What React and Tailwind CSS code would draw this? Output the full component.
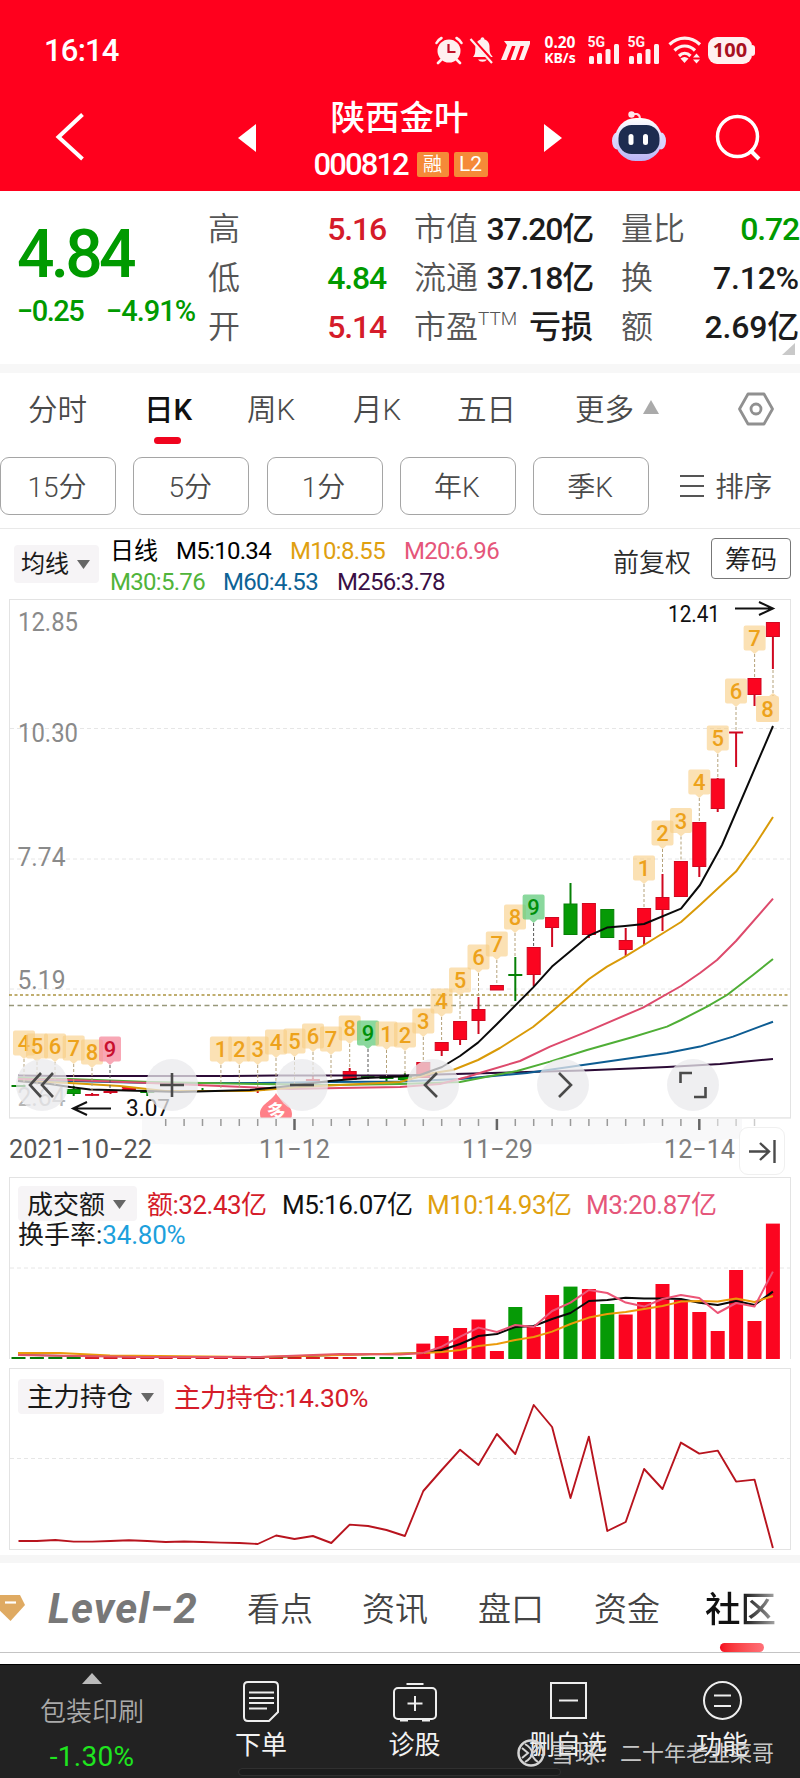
const STEP = 18.4
const xAt = (i) => 18.5 + STEP * i

// [index, bodyTop, bodyBottom, wickTop, wickBottom, isUp]
const candles = [
	[0, 1085, 1087, 1085, 1087, false],
	[3, 1089, 1094, 1086, 1096, false],
	[4, 1094, 1095.5, 1093, 1096, true],
	[5, 1091, 1093, 1090, 1094, true],
	[6, 1087, 1090, 1087, 1090, true],
	[7, 1090, 1093, 1088, 1096, false],
	[10, 1090, 1091, 1088, 1092, false],
	[13, 1089, 1091, 1088, 1093, true],
	[16, 1079, 1081, 1076, 1081, true],
	[17, 1081, 1082, 1080, 1082, false],
	[18, 1071, 1080, 1068, 1080, true],
	[19, 1075, 1078, 1075, 1079, false],
	[20, 1076, 1079, 1075, 1081, false],
	[21, 1076, 1080, 1073, 1080, false],
	[22, 1062, 1078, 1062, 1078, true],
	[23, 1042, 1051, 1042, 1056, true],
	[24, 1021, 1040, 1021, 1045, true],
	[25, 1009, 1021, 997, 1034, true],
	[26, 985, 990.5, 985, 990, true],
	[27, 974, 976, 957, 1001, false],
	[28, 947, 975, 947, 986, true],
	[29, 917, 928, 917, 947, true],
	[30, 903.5, 935, 883, 935, false],
	[31, 903, 935, 903, 938, true],
	[32, 909, 938, 909, 938, false],
	[33, 940, 950, 928, 956, true],
	[34, 908, 937, 908, 945, true],
	[35, 897, 910, 874, 931, true],
	[36, 861, 897, 861, 897, true],
	[37, 822, 867, 822, 877, true],
	[38, 778.5, 809, 778, 812, true],
	[39, 731.5, 733.5, 732, 767, true],
	[40, 678, 695, 678, 706, true],
	[41, 622, 637, 622, 669, true],
]

// [x, label center y, digit, kind, end of leader line]
const tags = [
	[24, 1043, 4, 'o', 1085],
	[37, 1046, 5, 'o', 1085],
	[55, 1046, 6, 'o', 1085],
	[73.7, 1048, 7, 'o', 1086],
	[92, 1052, 8, 'o', 1093],
	[110, 1049, 9, 'r', 1090],
	[220.9, 1049, 1, 'o', 1090],
	[239.3, 1049, 2, 'o', 1090],
	[257.7, 1049, 3, 'o', 1089],
	[276, 1042, 4, 'o', 1087],
	[294.5, 1041, 5, 'o', 1084],
	[313, 1036, 6, 'o', 1078],
	[331, 1039, 7, 'o', 1080],
	[349.7, 1028, 8, 'o', 1068],
	[368, 1033, 9, 'g', 1075],
	[386.5, 1034, 1, 'o', 1076],
	[405, 1035, 2, 'o', 1074],
	[423.3, 1021, 3, 'o', 1062],
	[441.6, 1001, 4, 'o', 1042],
	[460, 980, 5, 'o', 1021],
	[478.5, 957, 6, 'o', 997],
	[496.8, 944, 7, 'o', 985],
	[515, 917, 8, 'o', 957],
	[533.6, 907, 9, 'g', 947],
	[644, 868, 1, 'o', 908],
	[662.5, 833, 2, 'o', 874],
	[681, 820.5, 3, 'o', 861],
	[699.3, 782, 4, 'o', 822],
	[717.8, 738, 5, 'o', 778],
	[736, 691, 6, 'o', 731],
	[754.6, 638, 7, 'o', 678],
]

const tagColors = {
	o: { fill: '#f9cd82', text: '#eda21b' },
	r: { fill: '#f58a9c', text: '#c8102e' },
	g: { fill: '#63cb7c', text: '#00900a' },
}

const averages = [
	{ color: '#2c0b36', points: '18,1075.5 60,1076 230,1076 276,1075.5 400,1075.5 583,1070.6 667,1067 720,1064 773,1059' },
	{ color: '#0d5c92', points: '18,1080 70,1081 150,1083 260,1083 330,1082 400,1081.5 460,1079 527,1073 583,1065 667,1053 700,1046.6 733,1036.6 773,1021.7' },
	{ color: '#4fae36', points: '18,1078 70,1079 150,1082 260,1084 330,1085 400,1084 460,1082 517,1071 550,1061.6 587,1050 633,1037 667,1026.6 681,1020 707,1006.6 727,995 753,975 773,959' },
	{ color: '#dd4a6c', points: '18,1079 70,1080 150,1083 220,1086 290,1089 340,1088 400,1087 440,1084 467,1077 483,1072 520,1061 550,1046.6 587,1031.6 643,1007.6 681,986 700,973 717,960 736,941 773,898.7' },
	{ color: '#d99a08', points: '18,1081 70,1083 120,1086 165,1091 250,1091 300,1087 340,1085 400,1082 433,1073 453,1070 478,1060 500,1048 533,1027 553,1010.6 589,979 607,966.6 625,956.6 644,945 681,922 700,905 736,871.6 755,845 773,817' },
	{ color: '#0a0a0a', points: '18,1081 50,1084 70,1087 90,1089.6 145,1091 180,1092 250,1090 280,1087 330,1081 365,1078 400,1076.5 420,1075 442,1067 460,1056 478,1042.6 497,1024 533,987.6 552,966.6 570,951.6 589,935.6 607,927.6 625,926 644,924 681,908.6 700,885 722,845 773,726' },
]

// top edge of each bar, from index 22
const volumes = [
	[1343.6, 1], [1336, 1], [1328, 1], [1319.5, 1], [1351, 1], [1307, 0], [1327, 1], [1295, 1], [1286.6, 0], [1289, 1],
	[1304, 0], [1314.5, 1], [1302, 1], [1284, 1], [1300, 1], [1312, 1], [1331, 1], [1270, 1], [1321, 1], [1223.6, 1],
]

const volumeLines = [
	{ color: '#0a0a0a', points: [1353, 1350, 1344, 1336, 1334, 1327, 1326, 1319, 1313, 1301, 1300, 1297.7, 1298.6, 1298.6, 1299, 1302.7, 1305, 1301, 1305, 1291.6] },
	{ color: '#eb9a0a', points: [1353, 1352, 1350, 1346, 1344, 1340, 1337, 1331.6, 1324, 1317.6, 1314, 1312, 1309, 1306, 1301.6, 1301, 1301.6, 1298.6, 1302, 1296] },
	{ color: '#ec5577', points: [1353, 1346.6, 1336.6, 1327.6, 1332, 1325, 1327, 1311, 1302.6, 1290, 1293, 1302.6, 1306.6, 1299, 1295, 1298, 1313, 1303, 1306.6, 1271.6] },
]

const holdings = [
	1541, 1541, 1540, 1541.6, 1541.6, 1541, 1540.3, 1541, 1542, 1541.5, 1542, 1542.6, 1543, 1544, 1535.5, 1539, 1536, 1543, 1524.6,
	1526, 1530, 1536, 1491, 1470, 1449.7, 1465, 1434, 1454, 1405, 1427, 1498, 1436.6, 1531, 1522, 1469, 1489, 1442.6, 1453.6, 1450.6,
	1481.6, 1479.6, 1548,
]

const toPoints = (values, start) => values.map((y, i) => `${xAt(i + start)},${y}`).join(' ')

const AxisLabel = ({ x, y, width, size = 26, color = '#8a8a8a', children }) => (
	<text x={x} y={y} fontSize={size} fill={color} textLength={width} lengthAdjust="spacingAndGlyphs">
		{children}
	</text>
)

const StatusBar = () => (
	<div className="flex h-[100px] items-center pl-[44px] text-white">
		<span className="w-[391px] text-[31px] font-medium leading-none tracking-[-0.8px]">16:14</span>
		<svg className="h-[30px] w-[95px]" viewBox="0 0 95 30">
			<circle cx="14" cy="16" r="11.5" fill="#fff0f0" />
			<path d="M1.5 8a12 12 0 0 1 5-5M26.500 8a12 12 0 0 0-5-5M6 25l-3 3M22 25l3 3" stroke="#fff0f0" strokeWidth="2.600" fill="none" strokeLinecap="round" />
			<path d="M13.500 9v8h7" stroke="#c0102a" strokeWidth="2.200" fill="none" />
			<path d="M38 22c3-3 2-7 2.500-11 .5-4 3-6 5-6.500.3-3 3.700-3 4 0 2.500.5 5 3 5 7 0 4 0 7 3 10v.5z" fill="#fff0f0" />
			<path d="M43 24.500a5 4 0 0 0 9 0z" fill="#fff0f0" />
			<path d="M36 3l22 24" stroke="#ff001d" strokeWidth="4" />
			<path d="M35.500 4l21.500 24" stroke="#fff0f0" strokeWidth="2.200" />
			<path d="M69 6h27l-7 19h-5l5-14h-3.500l-5 14h-5l5-14H77l-5.500 14h-5.500l6-15z" fill="#fff0f0" />
		</svg>
		<div className="ml-[11px] w-[38px] whitespace-nowrap text-center font-['Noto_Sans'] text-[15.500px] font-bold leading-[15px]">
			<div>0.20</div>
			<div className="text-[14px]">KB/s</div>
		</div>
		<Signal className="ml-[9px] h-[28px] w-[32px]" />
		<Signal className="ml-[8px] h-[28px] w-[32px]" />
		<svg className="ml-[8px] h-[28px] w-[34px]" viewBox="0 0 34 28" fill="none" stroke="#fff0f0" strokeWidth="3.200">
			<path d="M1.500 8.500c9-8.500 21.500-8.500 30.500 0M6.500 14.500c6-6 14.500-6 20.500 0M11 20c3.500-3.500 8-3.500 11.500 0" />
			<path d="M12.500 22.500l4 4.500 4-4.500q-4-3-8 0z" fill="#fff0f0" stroke="none" />
			<path d="M25 21.500l3.500-4 3.500 4zM25 23.500l3.500 4 3.500-4z" fill="#fff0f0" stroke="none" />
		</svg>
		<div className="ml-[6px] flex h-[27px] w-[44px] items-center justify-center rounded-[9px] bg-[#fff0f0] font-['Noto_Sans'] text-[20px] font-bold leading-none text-[#a8101f]">
			100
		</div>
		<div className="h-[11px] w-[3px] rounded-r bg-[#fff0f0]" />
	</div>
)

const Signal = ({ className }) => (
	<svg className={className} viewBox="0 0 32 28" fill="#fff0f0">
		<text x="-0.5" y="11" fontSize="14" fontWeight="700">5G</text>
		<rect x="1" y="20" width="5" height="8" rx="1.500" />
		<rect x="9" y="17" width="5" height="11" rx="1.500" />
		<rect x="17.500" y="13" width="5" height="15" rx="1.500" />
		<rect x="26" y="8" width="5" height="20" rx="1.500" />
	</svg>
)

const TitleBar = () => (
	<div className="flex h-[90px] items-center text-white">
		<svg className="mb-[19px] ml-[54px] h-[50px] w-[32px]" viewBox="0 0 32 50" fill="none" stroke="white" strokeWidth="4">
			<path d="M28.500 3.500L4.500 26l24 22" />
		</svg>
		<svg className="mb-[15px] ml-[152px] h-[28px] w-[18px]" viewBox="0 0 18 28">
			<path d="M18 0v28L0 14z" fill="white" />
		</svg>
		<div className="mb-[4px] ml-[55px] flex w-[179px] flex-col items-center">
			<div className="pr-[2px] text-[34.500px] leading-[40px] font-medium">陕西金叶</div>
			<div className="mt-[2px] flex h-[48px] items-center">
				<span className="w-[103px] text-[31px] font-medium leading-none tracking-[-1.900px]">000812</span>
				<span className="flex h-[25px] w-[32px] items-center justify-center rounded-[2px] bg-[#f58a38] text-[19px] leading-none">融</span>
				<span className="ml-[5px] flex h-[25px] w-[34px] items-center justify-center rounded-[2px] bg-[#f58a38] text-[21px] leading-none">L2</span>
			</div>
		</div>
		<svg className="mb-[15px] ml-[54px] h-[28px] w-[18px]" viewBox="0 0 18 28">
			<path d="M0 0v28l18-14z" fill="white" />
		</svg>
		<svg className="mb-[18px] ml-[49px] h-[52px] w-[56px]" viewBox="0 0 56 52">
			<defs>
				<linearGradient id="shell" x1="0" y1="0" x2="0" y2="1">
					<stop offset="0" stopColor="#ffffff" />
					<stop offset="1" stopColor="#b9b4f5" />
				</linearGradient>
			</defs>
			<path d="M20 4h6q3 1 3 5" stroke="#ffd9e2" strokeWidth="2" fill="none" />
			<circle cx="20.500" cy="4.500" r="3.200" fill="#ffe6ec" />
			<ellipse cx="6" cy="31" rx="5" ry="8.500" fill="#d9d5ff" />
			<ellipse cx="50" cy="31" rx="5" ry="8.500" fill="#d9d5ff" />
			<rect x="4" y="8" width="47" height="43" rx="21" fill="url(#shell)" />
			<rect x="7.500" y="15" width="41" height="29" rx="13" fill="#1d2c50" />
			<rect x="17.500" y="24" width="5" height="11" rx="2.500" fill="white" />
			<rect x="32" y="24" width="5" height="11" rx="2.500" fill="white" />
		</svg>
		<svg className="mb-[16px] ml-[47px] h-[48px] w-[48px]" viewBox="0 0 48 48" fill="none" stroke="white" strokeWidth="3.500">
			<circle cx="23.500" cy="23.500" r="20" />
			<path d="M36 37l9 9" strokeWidth="4" />
		</svg>
	</div>
)

const QuoteRow = ({ label, value, color = 'text-[#1c1c1c]', tracking = 'tracking-[-1.200px]', small }) => (
	<div className="flex h-[49px] items-center justify-between leading-none">
		<span className="flex text-[32px] font-[350] text-[#555]">
			{label}
			{small && <span className="-mt-[2px] text-[19px] font-light">{small}</span>}
		</span>
		<span className={`text-[32px] font-medium ${tracking} ${color}`}>{value}</span>
	</div>
)

const Quote = () => (
	<section className="flex h-[173px] whitespace-nowrap pt-[13px]">
		<div className="w-[208px] pl-[17px] pt-[17px] text-[#009a00]">
			<div className="text-[66px] font-medium leading-[68px] tracking-[-3.800px]">4.84</div>
			<div className="mt-[6px] flex text-[29px] font-medium leading-[32px] tracking-[-1px]">
				<span className="w-[89px] tracking-[-1.500px]">−0.25</span>
				<span>−4.91%</span>
			</div>
		</div>
		<div className="w-[178px]">
			<QuoteRow label="高" value="5.16" color="text-[#d51c2a]" />
			<QuoteRow label="低" value="4.84" color="text-[#009a00]" />
			<QuoteRow label="开" value="5.14" color="text-[#d51c2a]" />
		</div>
		<div className="ml-[28px] w-[179px]">
			<QuoteRow label="市值" value="37.20亿" />
			<QuoteRow label="流通" value="37.18亿" />
			<QuoteRow label="市盈" small="TTM" value="亏损" tracking="tracking-normal" />
		</div>
		<div className="relative ml-[28px] w-[178px]">
			<QuoteRow label="量比" value="0.72" color="text-[#009a00]" />
			<QuoteRow label="换" value="7.12%" tracking="tracking-[-0.200px]" />
			<QuoteRow label="额" value="2.69亿" tracking="tracking-[-0.200px]" />
			<svg className="absolute bottom-[9px] right-[4px] h-[12px] w-[13px]" viewBox="0 0 13 12">
				<path d="M13 0v12H0z" fill="#c9c9c9" />
			</svg>
		</div>
	</section>
)

const PeriodTabs = () => (
	<nav className="flex h-[84px] items-start whitespace-nowrap pt-[21px] text-[29.500px] leading-[32px] font-[350] text-[#4a4a4a]">
		<span className="ml-[28px] w-[116px]">分时</span>
		<span className="flex w-[103px] flex-col font-medium text-[#111]">
			日K
			<span className="ml-[10px] mt-[11px] h-[7px] w-[27px] rounded-full bg-[#f0041e]" />
		</span>
		<span className="w-[106px]">周K</span>
		<span className="w-[104px]">月K</span>
		<span className="w-[118px]">五日</span>
		<span>更多</span>
		<svg className="ml-[9px] mt-[6px] h-[14px] w-[16px]" viewBox="0 0 16 14">
			<path d="M8 0l8 14H0z" fill="#aaa" />
		</svg>
		<svg className="-mt-[2px] ml-[79px] h-[34px] w-[36px]" viewBox="0 0 36 34" fill="none" stroke="#909090" strokeWidth="2.800" strokeLinejoin="round">
			<path d="M10 2h16l8.500 15L26 32H10L1.500 17z" />
			<circle cx="18" cy="17" r="5" />
		</svg>
	</nav>
)

const periods = ['15分', '5分', '1分', '年K', '季K']

const PeriodPills = () => (
	<div className="flex h-[72px] border-b border-[#e9e9e9] font-[350] text-[#4a4a4a]">
		<div className="flex gap-[17.300px]">
			{periods.map((period) => (
				<div key={period} className="flex h-[58px] w-[116px] items-center justify-center rounded-[9px] border border-[#a5a5a5] pr-[2px] pt-[4px] text-[28px] leading-none">
					{period}
				</div>
			))}
		</div>
		<svg className="ml-[31px] mt-[18px] h-[22px] w-[24px]" viewBox="0 0 24 22" stroke="#555" strokeWidth="2">
			<path d="M0 1h24M0 11h24M0 21h24" />
		</svg>
		<span className="ml-[11px] h-[58px] text-[28.500px] leading-[61px]">排序</span>
	</div>
)

const Picker = ({ className, children }) => (
	<div className={`flex items-center rounded-[4px] bg-[#f6f4f6] leading-none text-[#1a1a1a] ${className}`}>
		{children}
		<svg className="ml-[8px] h-[9px] w-[13px]" viewBox="0 0 13 9">
			<path d="M0 0h13L6.500 9z" fill="#666" />
		</svg>
	</div>
)

const AverageLegend = () => (
	<div className="flex h-[70px] whitespace-nowrap">
		<Picker className="ml-[14px] mt-[16px] h-[38px] w-[85px] pl-[7px] text-[24px]">均线</Picker>
		<div className="ml-[11px] w-[492px] pt-[7px] text-[24px] leading-[30.500px] tracking-[-0.700px]">
			<div className="flex">
				<span className="w-[66px] tracking-normal">日线</span>
				<span className="w-[114px]">M5:10.34</span>
				<span className="w-[114px] text-[#e0a010]">M10:8.55</span>
				<span className="text-[#e5567a]">M20:6.96</span>
			</div>
			<div className="flex">
				<span className="w-[113px] text-[#50b43a]">M30:5.76</span>
				<span className="w-[114px] text-[#0d6396]">M60:4.53</span>
				<span className="text-[#3a0f45]">M256:3.78</span>
			</div>
		</div>
		<span className="ml-[11px] mt-[16px] text-[26px] leading-[36px] text-[#2b2b2b] font-[350]">前复权</span>
		<div className="ml-[20px] mt-[9px] flex h-[41px] w-[80px] items-center justify-center rounded-[4px] border border-[#777] pt-[2px] text-[26px] leading-none font-[350] text-[#222]">
			筹码
		</div>
	</div>
)

const Tag = ({ x, y, digit, kind, end }) => (
	<g>
		<path d={`M${x} ${y + 16}V${end}`} stroke={kind === 'o' ? '#b5a27a' : '#555'} strokeDasharray="3 2" />
		<path
			d={`M${x - 9} ${y - 12.5}h18q2 0 2 2v21q0 2-2 2h-5l-4 3.500l-4-3.500h-5q-2 0-2-2v-21q0-2 2-2z`}
			fill={tagColors[kind].fill}
			fillOpacity={kind === 'o' ? 0.6 : 0.75}
		/>
		<text x={x} y={y + 8} fontSize="22" fontWeight="500" fill={tagColors[kind].text} textAnchor="middle">
			{digit}
		</text>
	</g>
)

const FloatButton = ({ children }) => (
	<div className="flex h-[52px] w-[52px] items-center justify-center rounded-full bg-[#e9e9ec]/75">
		<svg className="h-[28px] w-[28px]" viewBox="0 0 28 28" fill="none" stroke="#4a4a4a" strokeWidth="2.600">
			{children}
		</svg>
	</div>
)

const PriceChart = () => (
	<div className="relative h-[578px]">
		<svg className="block h-[578px] w-[800px]" viewBox="0 599 800 578">
			<rect x="9.500" y="599.500" width="781" height="518.500" fill="none" stroke="#e3e3e3" />
			<g stroke="#e6e6e6" strokeDasharray="4 3">
				<path d="M10 728.500h780M10 859h780M10 989h780" />
			</g>
			<path d="M9 995h780" stroke="#ac9440" strokeWidth="1.600" strokeDasharray="3 2.500" />
			<path d="M9 1005.500h780" stroke="#98987a" strokeWidth="1.500" strokeDasharray="5 3.500" />
			<AxisLabel x={18} y={631} width={60}>12.85</AxisLabel>
			<AxisLabel x={18} y={742} width={60}>10.30</AxisLabel>
			<AxisLabel x={17.5} y={865.5} width={48}>7.74</AxisLabel>
			<AxisLabel x={17.5} y={988.5} width={48}>5.19</AxisLabel>
			<AxisLabel x={17.5} y={1106} width={48} color="#b5b5b5">2.64</AxisLabel>

			{candles.map(([i, top, bottom, high, low, up]) => (
				<g key={i} fill={up ? '#fb0520' : '#069a06'} stroke={up ? '#d00820' : '#068006'}>
					<path d={`M${xAt(i)} ${high}V${low}`} strokeWidth="2" />
					<rect x={xAt(i) - 6.5} y={top + 0.5} width="13" height={Math.max(bottom - top - 1, 0.8)} />
				</g>
			))}
			{averages.map((line) => (
				<polyline key={line.color} points={line.points} fill="none" stroke={line.color} strokeWidth="2" strokeLinejoin="round" />
			))}
			{tags.map(([x, y, digit, kind, end]) => (
				<Tag key={x} x={x} y={y} digit={digit} kind={kind} end={end} />
			))}
			<path d="M773 670v26" stroke="#b5a27a" strokeDasharray="3 2" />
			<path d="M758 696h11l4-3l4 3q2 0 2 2v22q0 2-2 2h-19q-2 0-2-2v-22q0-2 2-2z" fill="#f9cd82" fillOpacity="0.65" />
			<text x="767.500" y="716.500" fontSize="22" fontWeight="500" fill="#eda21b" textAnchor="middle">8</text>

			<AxisLabel x={668} y={622} width={52} size={23} color="#111">12.41</AxisLabel>
			<path d="M735 608.500h37M759 602l14 6.500l-14 6.500" fill="none" stroke="#111" strokeWidth="2" />
			<AxisLabel x={126} y={1116} width={44} size={23} color="#111">3.07</AxisLabel>
			<path d="M111 1108.500H74M87 1102l-14 6.500l14 6.500" fill="none" stroke="#111" strokeWidth="2" />

			<path d="M276 1093c4 8 16 11 16 21q0 3-1 4h-30q-1-1-1-4c0-10 12-13 16-21z" fill="#ff8088" />
			<text x="276" y="1119" fontSize="19" fontWeight="700" fill="white" textAnchor="middle">多</text>
			<path d="M9 1118.500h782v12H9z" fill="#fff" />
			<path d="M142 1118.500h600v20q-100 8-250 5h-200q-120 2-150 0z" fill="#f8f8f9" />
			<path d="M9 1118h782" stroke="#e3e3e3" />
			{Array.from({ length: 33 }, (_, k) => k + 8).map((i) =>
				[15, 26, 37].includes(i) ? (
					<path key={i} d={`M${xAt(i)} 1119v11`} stroke="#666" strokeWidth="2.500" />
				) : (
					<path key={i} d={`M${xAt(i)} 1119v7`} stroke={i > 37 ? '#ccc' : '#999'} strokeWidth="1.500" />
				),
			)}
			<AxisLabel x={9} y={1158} width={143} color="#555">2021−10−22</AxisLabel>
			<AxisLabel x={259} y={1158} width={71} color="#7d7d7d">11−12</AxisLabel>
			<AxisLabel x={462} y={1158} width={71} color="#7d7d7d">11−29</AxisLabel>
			<AxisLabel x={664} y={1158} width={71} color="#7d7d7d">12−14</AxisLabel>
		</svg>
		<div className="absolute left-[16px] top-[460px] flex gap-[78.200px]">
			<FloatButton>
				<path d="M13 2L2 14l11 12M25 2L14 14l11 12" />
			</FloatButton>
			<FloatButton>
				<path d="M2 14h24M14 2v24" />
			</FloatButton>
			<FloatButton>
				<path d="M2 14h24" />
			</FloatButton>
			<FloatButton>
				<path d="M18 2L6 14l12 12" />
			</FloatButton>
			<FloatButton>
				<path d="M10 2l12 12-12 12" />
			</FloatButton>
			<FloatButton>
				<path d="M1.500 12V2H13M26.500 16v10H15" />
			</FloatButton>
		</div>
		<div className="absolute left-[739px] top-[528px] flex h-[48px] w-[46px] items-center justify-center rounded-[9px] border border-[#f0f0f0] bg-white">
			<svg className="h-[25px] w-[27px]" viewBox="0 0 27 25" fill="none" stroke="#4a4a4a" strokeWidth="2.400">
				<path d="M0 12.500h19M11 4l9 8.500-9 8.500M25.500 1v23" />
			</svg>
		</div>
	</div>
)

const flatBars = Array.from({ length: 22 }, (_, i) => i)

const VolumePanel = () => (
	<section className="relative ml-[9px] h-[182px] w-[782px] border border-b-0 border-[#e3e3e3]">
		<svg className="absolute -left-[10px] -top-px h-[182px] w-[800px]" viewBox="0 1177 800 182">
			<path d="M10 1268h780" stroke="#e6e6e6" strokeDasharray="4 3" />
			{flatBars.map((i) => (
				<rect key={i} x={xAt(i) - 7} y="1357" width="14" height="2" fill={i < 4 || i > 18 ? '#077a07' : '#d81c20'} />
			))}
			{volumes.map(([top, up], k) => (
				<rect key={k} x={xAt(k + 22) - 7} y={top} width="14" height={1359 - top} fill={up ? '#fb0520' : '#069a06'} />
			))}
			<polyline points="18,1355 80,1356 260,1357.500 340,1355 423,1353" fill="none" stroke="#0a0a0a" strokeWidth="1.500" />
			<polyline points="18,1353 60,1353 110,1355.500 260,1357 340,1355 423,1353" fill="none" stroke="#eb9a0a" strokeWidth="2" />
			<polyline points="18,1355 80,1356 140,1357 260,1357 340,1354 400,1354.500 423,1353" fill="none" stroke="#e55566" strokeWidth="2" />
			{volumeLines.map((line) => (
				<polyline key={line.color} points={toPoints(line.points, 22)} fill="none" stroke={line.color} strokeWidth="2" strokeLinejoin="round" />
			))}
		</svg>
		<div className="relative flex items-start whitespace-nowrap pl-[8px] pt-[8px] text-[26px] tracking-[-0.500px]">
			<Picker className="h-[35px] w-[119px] pl-[9px] pt-[2px] tracking-normal">成交额</Picker>
			<span className="ml-[10px] w-[135px] leading-[39px] text-[#d51c2a]">额:32.43亿</span>
			<span className="w-[145px] leading-[39px] text-[#111]">M5:16.07亿</span>
			<span className="w-[159px] leading-[39px] text-[#e0a010]">M10:14.93亿</span>
			<span className="leading-[39px] text-[#e5567a]">M3:20.87亿</span>
		</div>
		<div className="relative -mt-[5px] flex whitespace-nowrap pl-[8px] text-[26px] leading-[30px] text-[#1a1a1a]">
			换手率:<span className="tracking-[-0.200px] text-[#1da0dc]">34.80%</span>
		</div>
	</section>
)

const HoldingPanel = () => (
	<section className="relative ml-[9px] mt-[9px] h-[182px] w-[782px] border border-[#e3e3e3]">
		<svg className="absolute -left-[10px] -top-px h-[182px] w-[800px]" viewBox="0 1368 800 182">
			<path d="M10 1458.500h780" stroke="#e6e6e6" strokeDasharray="4 3" />
			<polyline points={toPoints(holdings, 0)} fill="none" stroke="#b8141e" strokeWidth="1.900" strokeLinejoin="round" />
		</svg>
		<div className="relative flex items-center whitespace-nowrap pl-[8px] pt-[8px] text-[26.500px]">
			<Picker className="h-[35px] w-[146px] pl-[9px] pt-[3px]">主力持仓</Picker>
			<span className="ml-[10px] pt-[3px] leading-[35px] tracking-[-0.400px] text-[#d51c2a]">主力持仓:14.30%</span>
		</div>
	</section>
)

const SectionTabs = () => (
	<nav className="flex h-[90px] whitespace-nowrap border-b border-[#c4c4c4] text-[33px] font-[350] leading-[94px] text-[#444]">
		<svg className="mt-[31px] h-[28px] w-[26px]" viewBox="0 0 26 28">
			<path d="M-4 1h24l5 10L10.500 27L-5 12z" fill="#dfaa62" />
			<path d="M5 8.500h11" stroke="white" strokeWidth="2.200" />
		</svg>
		<span className="ml-[22px] w-[199px] text-[42px] font-bold italic leading-[92px] tracking-[1px] text-[#787878]">Level−2</span>
		<span className="w-[115px]">看点</span>
		<span className="w-[116px]">资讯</span>
		<span className="w-[116px]">盘口</span>
		<span className="w-[111px]">资金</span>
		<span className="flex flex-col">
			<span className="h-[80px] bg-linear-to-r from-[#111] from-50% to-[#aaa] bg-clip-text text-[35.500px] font-medium text-transparent">社区</span>
			<span className="ml-[15px] h-[9px] w-[44px] rounded-full bg-linear-to-r from-[#f5041e] to-[#ff7078]" />
		</span>
	</nav>
)

const BottomBar = () => (
	<footer className="relative flex h-[114px] whitespace-nowrap border-t border-black bg-[#222] text-[26px] text-[#f2f2f2]">
		<div className="flex w-[184px] flex-col items-center pt-[8px] font-[350] text-[#aaa]">
			<svg className="h-[11px] w-[20px]" viewBox="0 0 20 11">
				<path d="M10 0l10 11H0z" fill="#bbb" />
			</svg>
			<span className="mt-[11px] leading-[34px]">包装印刷</span>
			<span className="mt-[13px] text-[28px] font-normal leading-[30px] tracking-[0.300px] text-[#1fe51f]">-1.30%</span>
		</div>
		<div className="flex w-[154px] flex-col items-center pt-[16px]">
			<svg className="h-[41px] w-[36px]" viewBox="0 0 36 41" fill="none" stroke="#eee" strokeWidth="2">
				<path d="M5 1h26q4 0 4 4v26l-9 9H5q-4 0-4-4V5q0-4 4-4zM6 11.500h25M6 17h25M6 22h25M6 27.500h18" />
			</svg>
			<span className="mt-[6px] leading-[34px]">下单</span>
		</div>
		<div className="flex w-[153px] flex-col items-center pt-[17px]">
			<svg className="h-[40px] w-[44px]" viewBox="0 0 44 40" fill="none" stroke="#eee" strokeWidth="2">
				<rect x="1" y="6" width="42" height="31" rx="4" />
				<path d="M13.500 2h17M22 14v15M14.500 21.500h15M7 38.500h8M29 38.500h8" />
			</svg>
			<span className="mt-[6px] leading-[34px]">诊股</span>
		</div>
		<div className="flex w-[154px] flex-col items-center pt-[17px]">
			<svg className="h-[37px] w-[37px]" viewBox="0 0 37 37" fill="none" stroke="#eee" strokeWidth="2">
				<path d="M1 1h35v35H1zM9 18.500h19" />
			</svg>
			<span className="mt-[9px] leading-[34px]">删自选</span>
		</div>
		<div className="flex w-[154px] flex-col items-center pt-[16px]">
			<svg className="h-[39px] w-[39px]" viewBox="0 0 39 39" fill="none" stroke="#eee" strokeWidth="2">
				<circle cx="19.500" cy="19.500" r="18.500" />
				<path d="M11 14.500h17M11 25h17" />
			</svg>
			<span className="mt-[8px] leading-[34px]">功能</span>
		</div>
		<div className="absolute bottom-[2px] left-[238px] h-[8px] w-[323px] rounded-full border border-[#303030] bg-[#1c1c1c]" />
		<div className="absolute left-[517px] top-[70px] flex items-center text-[22px] leading-[32px] text-[#ddd]/90">
			<svg className="h-[28px] w-[28px]" viewBox="0 0 28 28" fill="none" stroke="#d5d5d5" strokeWidth="2.500">
				<circle cx="14" cy="14" r="12.500" />
				<path d="M8 5q7 4 7 9T8 23M20 5q-5 4-5 9t6 9M5 9l6 5-6 5M22 8l-6 6" strokeWidth="2" />
			</svg>
			<span className="ml-[5px] w-[70px] pt-[3px] text-[25px]">雪球:</span>
			<span className="pt-[3px]">二十年老韭菜哥</span>
		</div>
	</footer>
)

const App = () => (
	<div className="h-[1778px] w-[800px] overflow-hidden bg-white font-[Roboto,'Noto_Sans_CJK_SC',sans-serif]">
		<header className="h-[191px] bg-[#ff001d]">
			<StatusBar />
			<TitleBar />
		</header>
		<Quote />
		<div className="h-[9px] bg-[#f7f7f7]" />
		<PeriodTabs />
		<PeriodPills />
		<AverageLegend />
		<PriceChart />
		<VolumePanel />
		<HoldingPanel />
		<div className="mt-[5px] h-[8px] bg-[#f6f6f6]" />
		<SectionTabs />
		<div className="h-[11px]" />
		<BottomBar />
	</div>
)

export default App
